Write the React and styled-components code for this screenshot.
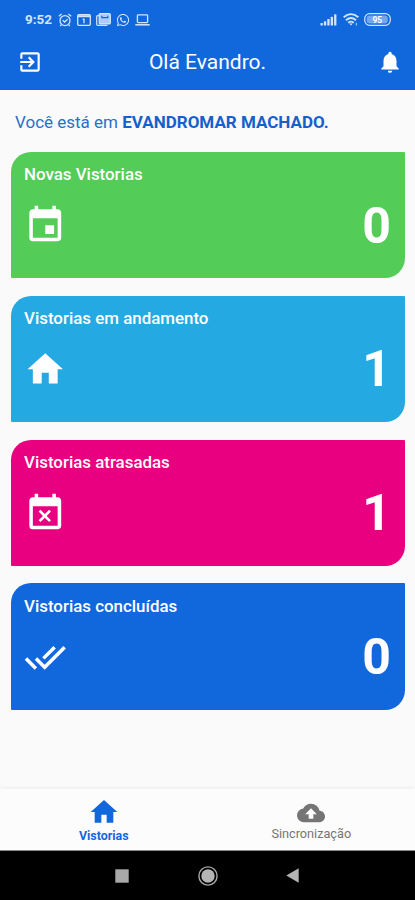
import React from 'react';
import styled, { createGlobalStyle } from 'styled-components';
import {
    MdExitToApp,
    MdNotifications,
    MdEvent,
    MdHome,
    MdEventBusy,
    MdDoneAll,
    MdCloudUpload,
} from 'react-icons/md';
import { FaWhatsapp } from 'react-icons/fa';

const GlobalStyle = createGlobalStyle`
    * {
        box-sizing: border-box;
    }
    body {
        margin: 0;
        font-family: Roboto, sans-serif;
        background: #fafafa;
    }
    svg {
        display: block;
        flex-shrink: 0;
    }
`;

const Screen = styled.div`
    display: flex;
    flex-direction: column;
    width: 415px;
    height: 900px;
    overflow: hidden;
    background: #fafafa;
`;

const Header = styled.header`
    height: 90px;
    background: #1168dd;
    color: white;
`;

const StatusBar = styled.div`
    display: flex;
    justify-content: space-between;
    align-items: center;
    height: 39px;
    padding: 0 24px 0 25px;
    color: #d3e5fc;
`;

const StatusGroup = styled.div`
    display: flex;
    align-items: center;
    gap: ${props => props.$gap}px;
`;

const Time = styled.span`
    width: 28px;
    font-size: 13.4px;
    font-weight: 700;
    line-height: 16px;
`;

const AppBar = styled.div`
    display: flex;
    justify-content: space-between;
    align-items: center;
    height: 45px;
    padding: 0 12px 0 17px;
`;

const AppTitle = styled.h1`
    margin: 0;
    padding-right: 5px;
    font-size: 21px;
    font-weight: 400;
    line-height: 26px;
`;

const Content = styled.main`
    flex: 1;
    padding: 0 10px 0 11px;
`;

const Company = styled.p`
    margin: 0;
    padding: 22px 0 0 4px;
    height: 61.8px;
    font-size: 17px;
    line-height: 20px;
    color: #2a6fc9;
    white-space: nowrap;

    strong {
        font-weight: 700;
        color: #1560cc;
    }
`;

const CardList = styled.div`
    display: flex;
    flex-direction: column;
    gap: 17.4px;
`;

const Card = styled.section`
    height: 126.5px;
    padding: 12.3px 14px 0 13px;
    border-radius: 20px 1px 20px 1px;
    background: ${props => props.$color};
    color: white;
`;

const CardTitle = styled.h2`
    margin: 0;
    font-size: 16.9px;
    font-weight: 500;
    line-height: 20px;
`;

const CardBody = styled.div`
    display: flex;
    justify-content: space-between;
    align-items: center;
    height: 82px;
`;

const Count = styled.span`
    padding-top: 1px;
    font-size: 50px;
    font-weight: 700;
    line-height: 60px;
`;

const TabBar = styled.nav`
    display: flex;
    height: 62px;
    border-bottom: 1px solid #8b8b8b;
    background: #fcfcfc;
    box-shadow: 0 -1px 4px rgba(0, 0, 0, 0.06);
`;

const Tab = styled.div`
    flex: 1;
    display: flex;
    flex-direction: column;
    align-items: center;
    padding-top: ${props => (props.$active ? 7 : 10)}px;
    color: ${props => (props.$active ? '#1168dd' : '#757575')};
    font-size: ${props => (props.$active ? 12.4 : 12.7)}px;
    font-weight: ${props => (props.$active ? 700 : 400)};
    line-height: 16px;
`;

const TabLabel = styled.span`
    margin-top: ${props => props.$top}px;
`;

const SystemNav = styled.div`
    display: flex;
    justify-content: space-between;
    align-items: center;
    height: 49px;
    padding: 0 116px 0 115px;
    background: black;
`;

const cards = [
    { title: 'Novas Vistorias', color: '#53cc58', icon: MdEvent, count: 0 },
    { title: 'Vistorias em andamento', color: '#25a9e2', icon: MdHome, count: 1 },
    { title: 'Vistorias atrasadas', color: '#e90080', icon: MdEventBusy, count: 1 },
    { title: 'Vistorias concluídas', color: '#1168dd', icon: MdDoneAll, count: 0 },
];

function AlarmIcon() {
    return (
        <svg width="14" height="14" viewBox="0 0 14 14" fill="none" stroke="currentColor" strokeWidth="1.3">
            <circle cx="7" cy="7.6" r="5" />
            <path d="M0.8 3.2L3.6 0.9M13.2 3.2L10.4 0.9M3.3 11.6L2.2 13.2M10.7 11.6L11.8 13.2M4.6 7.1L6.6 9L9.6 6.2" />
        </svg>
    );
}

function WindowIcon() {
    return (
        <svg width="14" height="12" viewBox="0 0 14 12" fill="none" stroke="currentColor" strokeWidth="1.3">
            <rect x="0.7" y="0.7" width="12.6" height="10.6" rx="1" />
            <path d="M1 2.2H13" strokeWidth="2" />
            <path d="M7 4.8V9.2M5.8 5.6L7 4.8" />
        </svg>
    );
}

function NewsIcon() {
    return (
        <svg width="15" height="13" viewBox="0 0 15 13" fill="none" stroke="currentColor" strokeWidth="1.2">
            <path d="M3.2 2.6H1.6Q0.7 2.6 0.7 3.6V11.2Q0.7 12.3 1.8 12.3H11.4" />
            <rect x="3.2" y="0.7" width="11.1" height="10.2" rx="1" fill="currentColor" fillOpacity="0.8" />
            <path d="M5.8 2.7V4.6H11.8V2.7" stroke="#1168dd" />
        </svg>
    );
}

function LaptopIcon() {
    return (
        <svg width="15" height="12" viewBox="0 0 15 12" fill="none" stroke="currentColor" strokeWidth="1.3">
            <rect x="2.4" y="0.8" width="10.2" height="7.8" rx="0.8" />
            <path d="M0.3 10.8H14.7" strokeWidth="1.5" />
        </svg>
    );
}

function SignalIcon() {
    return (
        <svg width="17" height="12" viewBox="0 0 17 12" fill="currentColor">
            <rect x="0.5" y="9" width="2.3" height="2.5" rx="0.6" />
            <rect x="3.9" y="7.2" width="2.3" height="4.3" rx="0.6" />
            <rect x="7.3" y="5" width="2.3" height="6.5" rx="0.6" />
            <rect x="10.7" y="2.7" width="2.3" height="8.8" rx="0.6" />
            <rect x="14.1" y="0.3" width="2.3" height="11.2" rx="0.6" />
        </svg>
    );
}

function WifiIcon() {
    return (
        <svg width="16" height="13" viewBox="0 0 16 13" fill="none" stroke="currentColor" strokeWidth="1.8">
            <path d="M0.7 4.3Q8 -2.1 15.3 4.3M3 7.2Q8 2.8 13 7.2M5.3 9.8Q8 7.5 10.7 9.8" />
            <path d="M6.3 10.5L8 12.5L9.7 10.5Z" fill="currentColor" stroke="none" />
            <path d="M13.4 9.8V12.6" strokeWidth="1.2" opacity="0.7" />
        </svg>
    );
}

function BatteryIcon() {
    return (
        <svg width="27" height="13" viewBox="0 0 27 13">
            <rect x="0.7" y="0.7" width="25.6" height="11.6" rx="5" fill="none" stroke="currentColor" strokeWidth="1.2" />
            <rect x="2.6" y="2.6" width="21.2" height="7.8" rx="3.2" fill="currentColor" fillOpacity="0.5" />
            <text x="13.3" y="9.5" textAnchor="middle" fontSize="8.5" fontWeight="700" fill="white">95</text>
        </svg>
    );
}

function InspectionCard({ title, color, icon: Icon, count }) {
    return (
        <Card $color={color}>
            <CardTitle>{title}</CardTitle>
            <CardBody>
                <Icon size={42.5} />
                <Count>{count}</Count>
            </CardBody>
        </Card>
    );
}

function App() {
    return (
        <Screen>
            <GlobalStyle />
            <Header>
                <StatusBar>
                    <StatusGroup $gap={5}>
                        <Time>9:52</Time>
                        <AlarmIcon />
                        <WindowIcon />
                        <NewsIcon />
                        <FaWhatsapp size={14} />
                        <LaptopIcon />
                    </StatusGroup>
                    <StatusGroup $gap={5.5}>
                        <SignalIcon />
                        <WifiIcon />
                        <BatteryIcon />
                    </StatusGroup>
                </StatusBar>
                <AppBar>
                    <MdExitToApp size={26} />
                    <AppTitle>Olá Evandro.</AppTitle>
                    <MdNotifications size={26} />
                </AppBar>
            </Header>
            <Content>
                <Company>
                    Você está em <strong>EVANDROMAR MACHADO.</strong>
                </Company>
                <CardList>
                    {cards.map(card => (
                        <InspectionCard key={card.title} {...card} />
                    ))}
                </CardList>
            </Content>
            <TabBar>
                <Tab $active>
                    <MdHome size={32} />
                    <TabLabel $top={0.4}>Vistorias</TabLabel>
                </Tab>
                <Tab>
                    <MdCloudUpload size={28} />
                    <TabLabel $top={-1}>Sincronização</TabLabel>
                </Tab>
            </TabBar>
            <SystemNav>
                <svg width="14" height="14" viewBox="0 0 14 14">
                    <rect x="0.3" y="0.3" width="13.4" height="13.4" fill="#a9a9a9" />
                </svg>
                <svg width="20" height="20" viewBox="0 0 20 20">
                    <circle cx="10" cy="10" r="9.1" fill="none" stroke="#a9a9a9" strokeWidth="1.4" />
                    <circle cx="10" cy="10" r="6.7" fill="#b4b4b4" />
                </svg>
                <svg width="13" height="15" viewBox="0 0 13 15">
                    <path d="M0.3 7.5L12.7 0.3V14.7Z" fill="#b4b4b4" />
                </svg>
            </SystemNav>
        </Screen>
    );
}

export default App;
